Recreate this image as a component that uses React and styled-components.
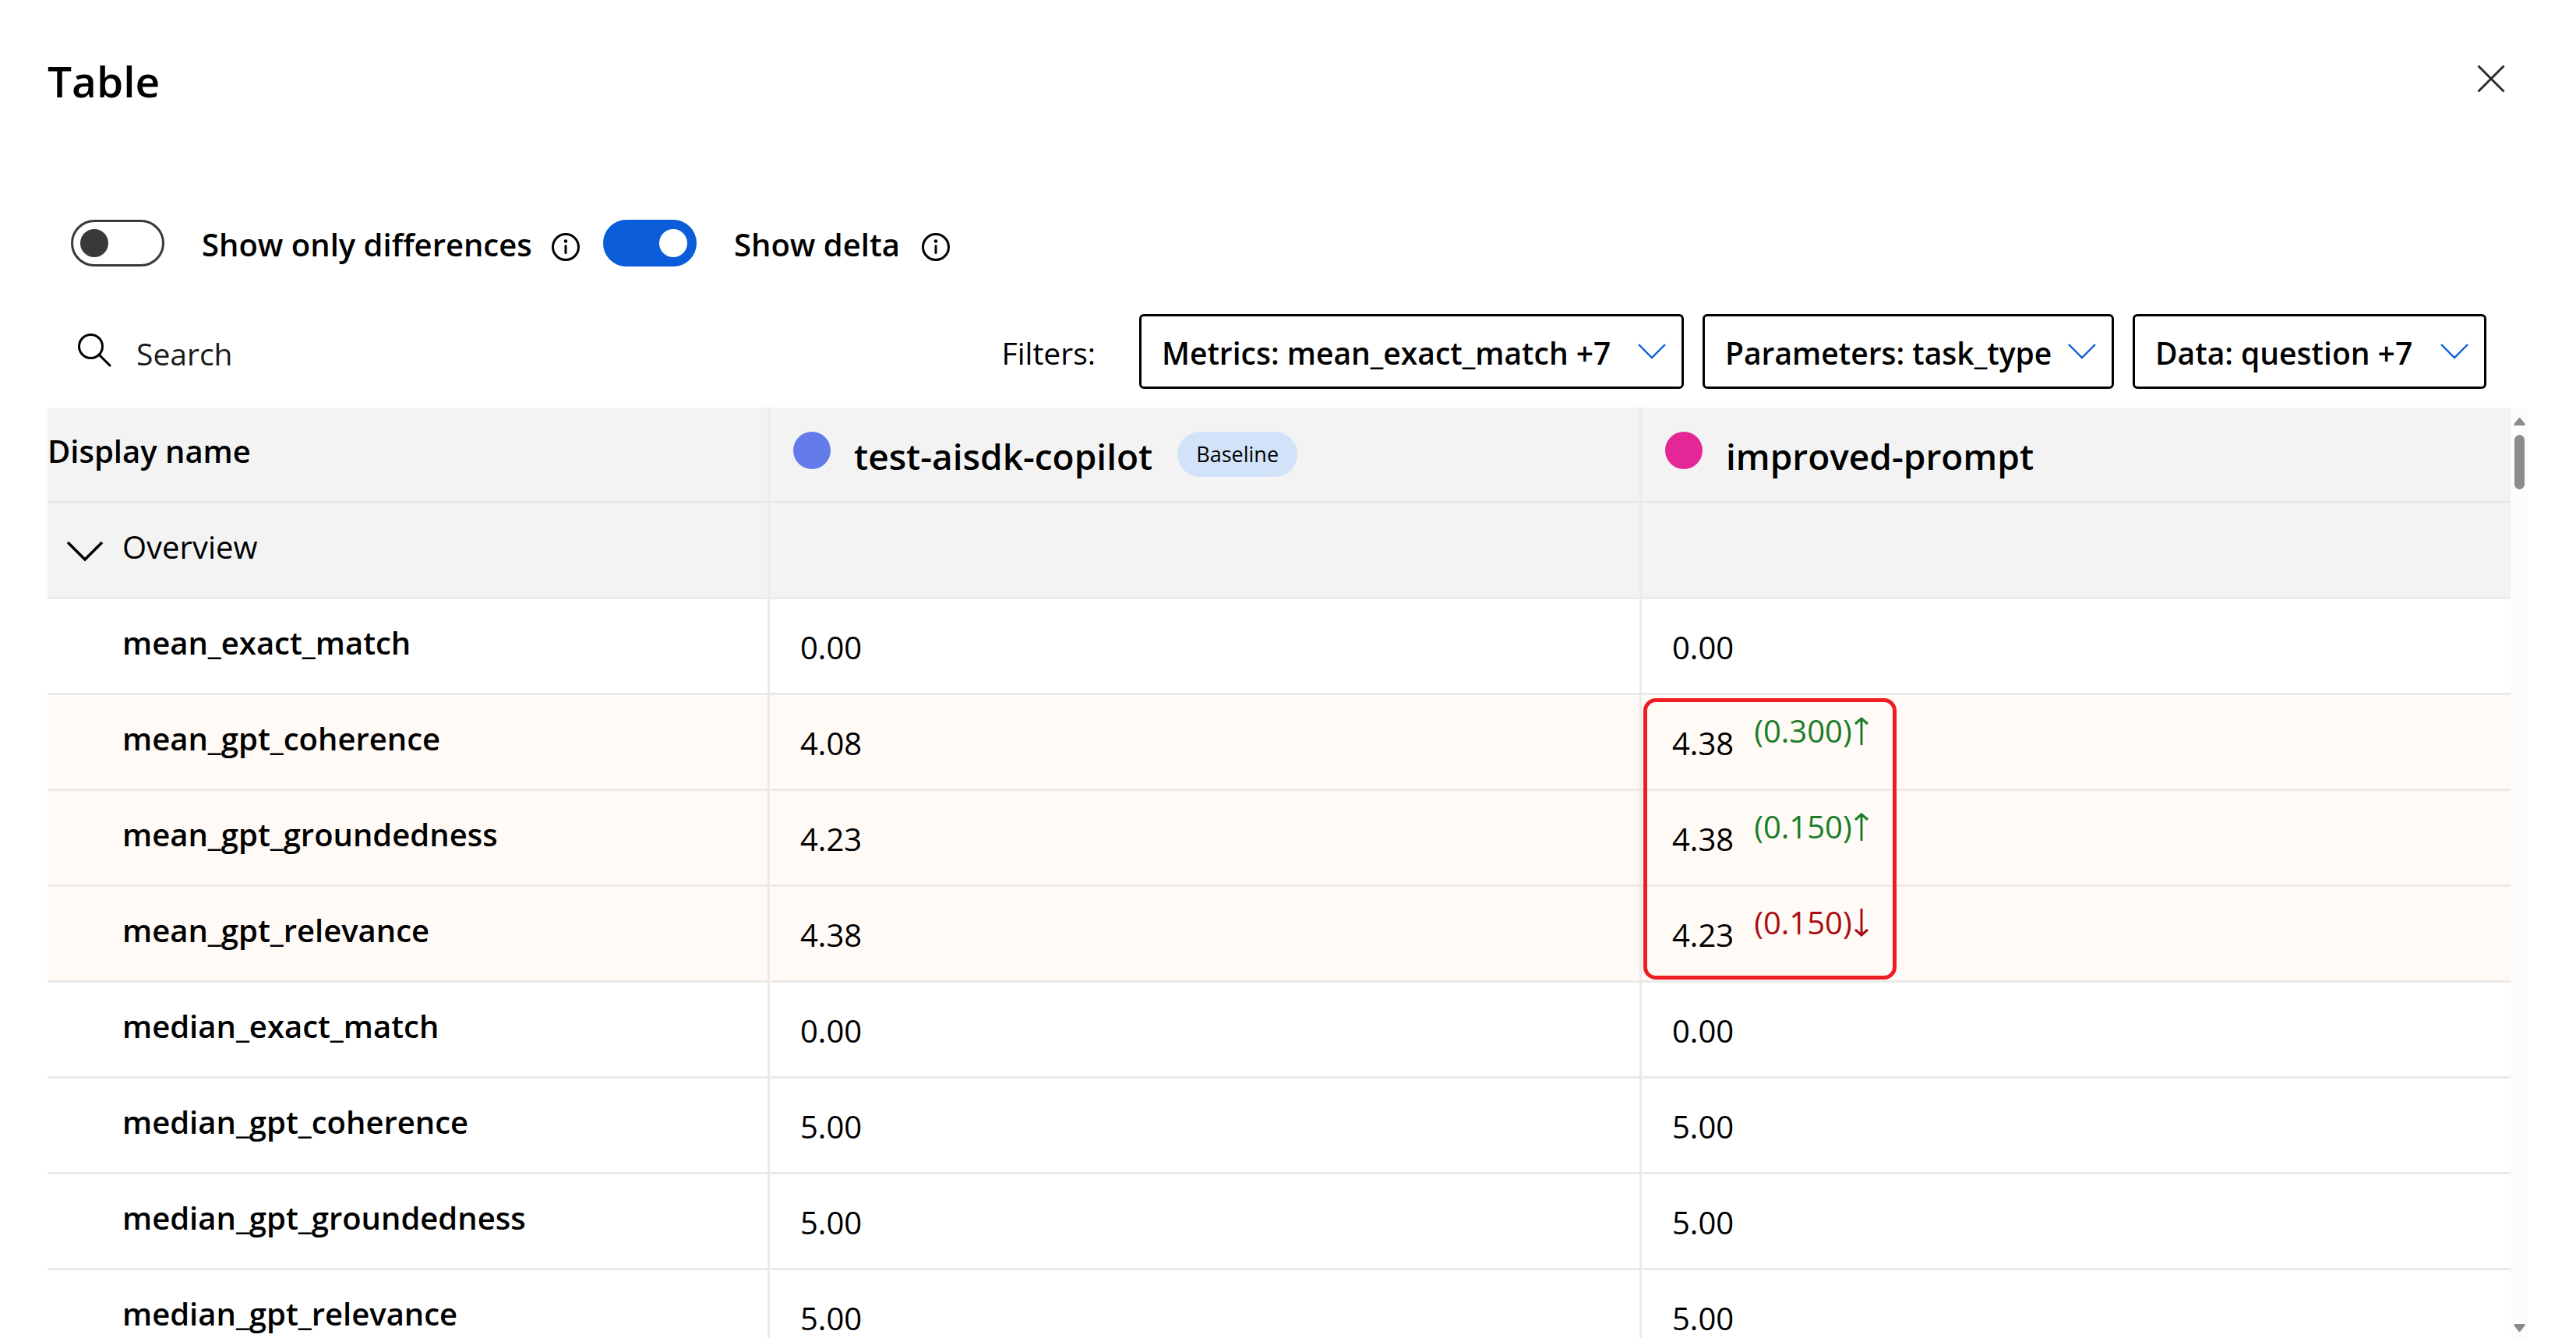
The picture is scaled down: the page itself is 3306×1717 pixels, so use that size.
import React, { useState } from "react";
import styled, { createGlobalStyle, css } from "styled-components";

const GlobalStyle = createGlobalStyle`
  *, *::before, *::after { box-sizing: border-box; }
  body {
    margin: 0;
    background: #ffffff;
    color: #000000;
    font: 400 40px/60px "Open Sans", "Noto Sans", sans-serif;
  }
  button, input, select { font: inherit; color: inherit; }
`;

const Page = styled.main`
  display: flex;
  flex-direction: column;
  height: 100vh;
  padding: 68px 61px 0;
  overflow: hidden;
`;

const Header = styled.header`
  display: flex;
  justify-content: space-between;
  align-items: flex-start;
  height: 72px;
  padding-right: 30px;
`;

const Title = styled.h1`
  margin: 0;
  font-size: 55px;
  line-height: 72px;
  font-weight: 600;
`;

const CloseButton = styled.button`
  display: flex;
  padding: 15px 0;
  border: 0;
  background: none;
  cursor: pointer;
`;

const Toggles = styled.div`
  display: flex;
  align-items: center;
  gap: 30px;
  margin-top: 142px;
  padding-left: 30px;
  height: 60px;
`;

const ToggleGroup = styled.div`
  display: flex;
  align-items: center;
  width: ${(p) => p.$width}px;
`;

const Switch = styled.input`
  appearance: none;
  display: flex;
  align-items: center;
  flex: none;
  width: 120px;
  height: 60px;
  margin: 0;
  padding: 0 9px;
  border: 3px solid #393939;
  border-radius: 30px;
  background: #ffffff;
  cursor: pointer;

  &::before {
    content: "";
    width: 36px;
    height: 36px;
    border-radius: 50%;
    background: #393939;
  }

  &:checked {
    justify-content: flex-end;
    border-color: #0b5cd8;
    background: #0b5cd8;
  }

  &:checked::before { background: #ffffff; }
`;

const ToggleLabel = styled.label`
  flex: 1;
  padding: 4px 0 0 48px;
  font-weight: 600;
  white-space: nowrap;
`;

const InfoIcon = styled.svg`
  flex: none;
  width: 36px;
  height: 36px;
  margin-top: 10px;
`;

const Toolbar = styled.div`
  display: flex;
  align-items: center;
  justify-content: space-between;
  margin: 61px 54px 24px 38px;
  height: 96px;
`;

const SearchBox = styled.label`
  display: flex;
  align-items: center;
  gap: 32px;
`;

const SearchIcon = styled.svg`
  width: 44px;
  height: 44px;
  margin-bottom: 4px;
`;

const SearchInput = styled.input`
  width: 600px;
  height: 64px;
  padding: 4px 0 0;
  border: 0;
  outline: 0;
  background: transparent;
  font-size: 39px;

  &::placeholder { color: #1b1b1b; opacity: 1; }
`;

const Filters = styled.div`
  display: flex;
  align-items: center;
  gap: 24px;
`;

const FiltersLabel = styled.span`
  margin-right: 32px;
  padding-top: 4px;
  font-size: 39px;
`;

const FilterWrap = styled.div`
  position: relative;
  width: ${(p) => p.$width}px;
`;

const FilterSelect = styled.select`
  appearance: none;
  width: 100%;
  height: 96px;
  padding: 4px 52px 0 26px;
  border: 3px solid #000000;
  border-radius: 6px;
  background: #ffffff;
  font-size: 39px;
  font-weight: 600;
  cursor: pointer;
`;

const FilterChevron = styled.svg`
  position: absolute;
  top: 38px;
  right: 23px;
  width: 36px;
  height: 20px;
  pointer-events: none;
`;

const TableArea = styled.section`
  display: flex;
  flex: 1;
  min-height: 0;
`;

const TableViewport = styled.div`
  flex: 1;
  overflow: auto;
  scrollbar-width: none;
`;

const ScrollRail = styled.div`
  display: flex;
  flex-direction: column;
  align-items: center;
  justify-content: space-between;
  width: 23px;
  padding: 13px 0 8px;
  background: #fcfcfc;
`;

const RailTop = styled.div`
  display: flex;
  flex-direction: column;
  align-items: center;
  gap: 12px;
`;

const Thumb = styled.div`
  width: 13px;
  height: 70px;
  border-radius: 7px;
  background: #8b8b8b;
`;

const RailArrow = styled.svg`
  width: 15px;
  height: 10px;
`;

const Table = styled.table`
  width: 100%;
  table-layout: fixed;
  border-collapse: separate;
  border-spacing: 0;
`;

const Col = styled.col`
  width: ${(p) => p.$width}px;
`;

const cell = css`
  height: 123px;
  border-right: 3px solid #eaeaea;
  border-bottom: 3px solid #eaeaea;
  text-align: left;
  vertical-align: top;
  white-space: nowrap;

  &:last-child { border-right: 0; }
`;

const Row = styled.tr`
  background: ${(p) => (p.$head ? "#f3f3f3" : p.$changed ? "#fffaf6" : "#ffffff")};
`;

const CornerCell = styled.th`
  ${cell}
  padding: 26px 0 0;
  font-weight: 600;
`;

const RunCell = styled.th`
  ${cell}
  padding: 31px 30px 0;
`;

const Run = styled.div`
  display: flex;
  align-items: flex-start;
`;

const Dot = styled.span`
  width: 48px;
  height: 48px;
  margin-right: 30px;
  border-radius: 50%;
  background: ${(p) => p.$color};
`;

const RunName = styled.span`
  font-size: 46px;
  line-height: 62px;
  font-weight: 600;
`;

const Badge = styled.span`
  margin-left: 32px;
  padding: 0 24px;
  border-radius: 29px;
  background: #d2e2f8;
  font-size: 27px;
  line-height: 58px;
  font-weight: 400;
`;

const GroupCell = styled.th`
  ${cell}
  padding: 26px 0 0 24px;
  font-weight: 400;
`;

const GroupButton = styled.button`
  display: flex;
  align-items: center;
  gap: 24px;
  padding: 0;
  border: 0;
  background: none;
  cursor: pointer;
`;

const GroupChevron = styled.svg`
  width: 48px;
  height: 28px;
  margin-top: 12px;
`;

const MetricCell = styled.th`
  ${cell}
  padding: 26px 0 0 96px;
  font-weight: 600;
`;

const ValueCell = styled.td`
  ${cell}
  position: relative;
  padding: 22px 39px 0;
  line-height: 48px;
`;

const ValueRow = styled.div`
  display: flex;
  align-items: flex-start;
  gap: 26px;
`;

const Value = styled.span`
  padding-top: 16px;
`;

const Delta = styled.span`
  display: flex;
  align-items: center;
  gap: 3px;
  color: ${(p) => (p.$up ? "#1b7d29" : "#a80f12")};
`;

const ArrowIcon = styled.svg`
  width: 18px;
  height: 36px;
`;

const Highlight = styled.div`
  position: absolute;
  z-index: 1;
  top: 4px;
  left: 2px;
  width: 325px;
  height: 361px;
  border: 5px solid #ee1c24;
  border-radius: 16px;
  pointer-events: none;
`;

const runs = [
  { name: "test-aisdk-copilot", color: "#637cea", baseline: true },
  { name: "improved-prompt", color: "#e52697" },
];

const metrics = [
  { name: "mean_exact_match", values: ["0.00", "0.00"] },
  { name: "mean_gpt_coherence", values: ["4.08", "4.38"], delta: "(0.300)", up: true, highlight: true },
  { name: "mean_gpt_groundedness", values: ["4.23", "4.38"], delta: "(0.150)", up: true },
  { name: "mean_gpt_relevance", values: ["4.38", "4.23"], delta: "(0.150)", up: false },
  { name: "median_exact_match", values: ["0.00", "0.00"] },
  { name: "median_gpt_coherence", values: ["5.00", "5.00"] },
  { name: "median_gpt_groundedness", values: ["5.00", "5.00"] },
  { name: "median_gpt_relevance", values: ["5.00", "5.00"] },
];

const filters = [
  { label: "Metrics: mean_exact_match +7", width: 699 },
  { label: "Parameters: task_type", width: 528 },
  { label: "Data: question +7", width: 454 },
];

function Info() {
  return (
    <InfoIcon viewBox="0 0 36 36" fill="none" aria-hidden="true">
      <circle cx="18" cy="18" r="16.5" stroke="#000" strokeWidth="3" />
      <circle cx="18" cy="10.5" r="2.3" fill="#000" />
      <path d="M18 16.5v9" stroke="#000" strokeWidth="3" strokeLinecap="round" />
    </InfoIcon>
  );
}

function Toggle({ id, label, width, initial }) {
  const [on, setOn] = useState(initial);
  return (
    <ToggleGroup $width={width}>
      <Switch id={id} type="checkbox" role="switch" checked={on} onChange={(e) => setOn(e.target.checked)} />
      <ToggleLabel htmlFor={id}>{label}</ToggleLabel>
      <Info />
    </ToggleGroup>
  );
}

function Arrow({ up }) {
  return (
    <ArrowIcon viewBox="0 0 18 36" fill="none" stroke="currentColor" aria-hidden="true">
      <path d={up ? "M9 36V2M1 9l8-7 8 7" : "M9 0v34M1 27l8 7 8-7"} strokeWidth="3" />
    </ArrowIcon>
  );
}

export default function App() {
  const [open, setOpen] = useState(true);
  return (
    <Page>
      <GlobalStyle />
      <Header>
        <Title>Table</Title>
        <CloseButton type="button" aria-label="Close">
          <svg width="36" height="36" viewBox="0 0 36 36" fill="none" stroke="#2b2b2b" strokeWidth="3">
            <path d="M1.500 1.500l33 33M34.500 1.500l-33 33" />
          </svg>
        </CloseButton>
      </Header>

      <Toggles>
        <Toggle id="differences" label="Show only differences" width={653} initial={false} />
        <Toggle id="delta" label="Show delta" width={445} initial />
      </Toggles>

      <Toolbar>
        <SearchBox>
          <SearchIcon viewBox="0 0 44 44" fill="none" stroke="#000" strokeWidth="3" strokeLinecap="round" aria-hidden="true">
            <circle cx="17.5" cy="17.5" r="15" />
            <path d="M28 28l14 14" />
          </SearchIcon>
          <SearchInput type="search" placeholder="Search" aria-label="Search" />
        </SearchBox>
        <Filters>
          <FiltersLabel>Filters:</FiltersLabel>
          {filters.map((f) => (
            <FilterWrap key={f.label} $width={f.width}>
              <FilterSelect aria-label={f.label}>
                <option>{f.label}</option>
              </FilterSelect>
              <FilterChevron viewBox="0 0 36 20" fill="none" stroke="#0b5cd8" strokeWidth="2.4" aria-hidden="true">
                <path d="M1 1l17 17L35 1" />
              </FilterChevron>
            </FilterWrap>
          ))}
        </Filters>
      </Toolbar>

      <TableArea>
        <TableViewport>
          <Table>
            <colgroup>
              <Col $width={927} />
              <Col $width={1119} />
              <col />
            </colgroup>
            <thead>
              <Row $head>
                <CornerCell scope="col">Display name</CornerCell>
                {runs.map((r) => (
                  <RunCell key={r.name} scope="col">
                    <Run>
                      <Dot $color={r.color} />
                      <RunName>{r.name}</RunName>
                      {r.baseline && <Badge>Baseline</Badge>}
                    </Run>
                  </RunCell>
                ))}
              </Row>
            </thead>
            <tbody>
              <Row $head>
                <GroupCell scope="row">
                  <GroupButton type="button" aria-expanded={open} onClick={() => setOpen(!open)}>
                    <GroupChevron viewBox="0 0 48 28" fill="none" stroke="#000" strokeWidth="3.6" aria-hidden="true">
                      <path d="M2 2l22 22L46 2" />
                    </GroupChevron>
                    Overview
                  </GroupButton>
                </GroupCell>
                <ValueCell />
                <ValueCell />
              </Row>
              {open &&
                metrics.map((m) => (
                  <Row key={m.name} $changed={Boolean(m.delta)}>
                    <MetricCell scope="row">{m.name}</MetricCell>
                    {m.values.map((value, i) => (
                      <ValueCell key={runs[i].name}>
                        <ValueRow>
                          <Value>{value}</Value>
                          {i === 1 && m.delta && (
                            <Delta $up={m.up}>
                              {m.delta}
                              <Arrow up={m.up} />
                            </Delta>
                          )}
                        </ValueRow>
                        {i === 1 && m.highlight && <Highlight />}
                      </ValueCell>
                    ))}
                  </Row>
                ))}
            </tbody>
          </Table>
        </TableViewport>
        <ScrollRail aria-hidden="true">
          <RailTop>
            <RailArrow viewBox="0 0 15 10" fill="#8b8b8b">
              <path d="M6 1Q7.500 -1 9 1L14.500 8Q15 10 13 10H2Q0 10 .5 8Z" />
            </RailArrow>
            <Thumb />
          </RailTop>
          <RailArrow viewBox="0 0 15 10" fill="#8b8b8b">
            <path d="M6 9Q7.500 11 9 9L14.500 2Q15 0 13 0H2Q0 0 .5 2Z" />
          </RailArrow>
        </ScrollRail>
      </TableArea>
    </Page>
  );
}
